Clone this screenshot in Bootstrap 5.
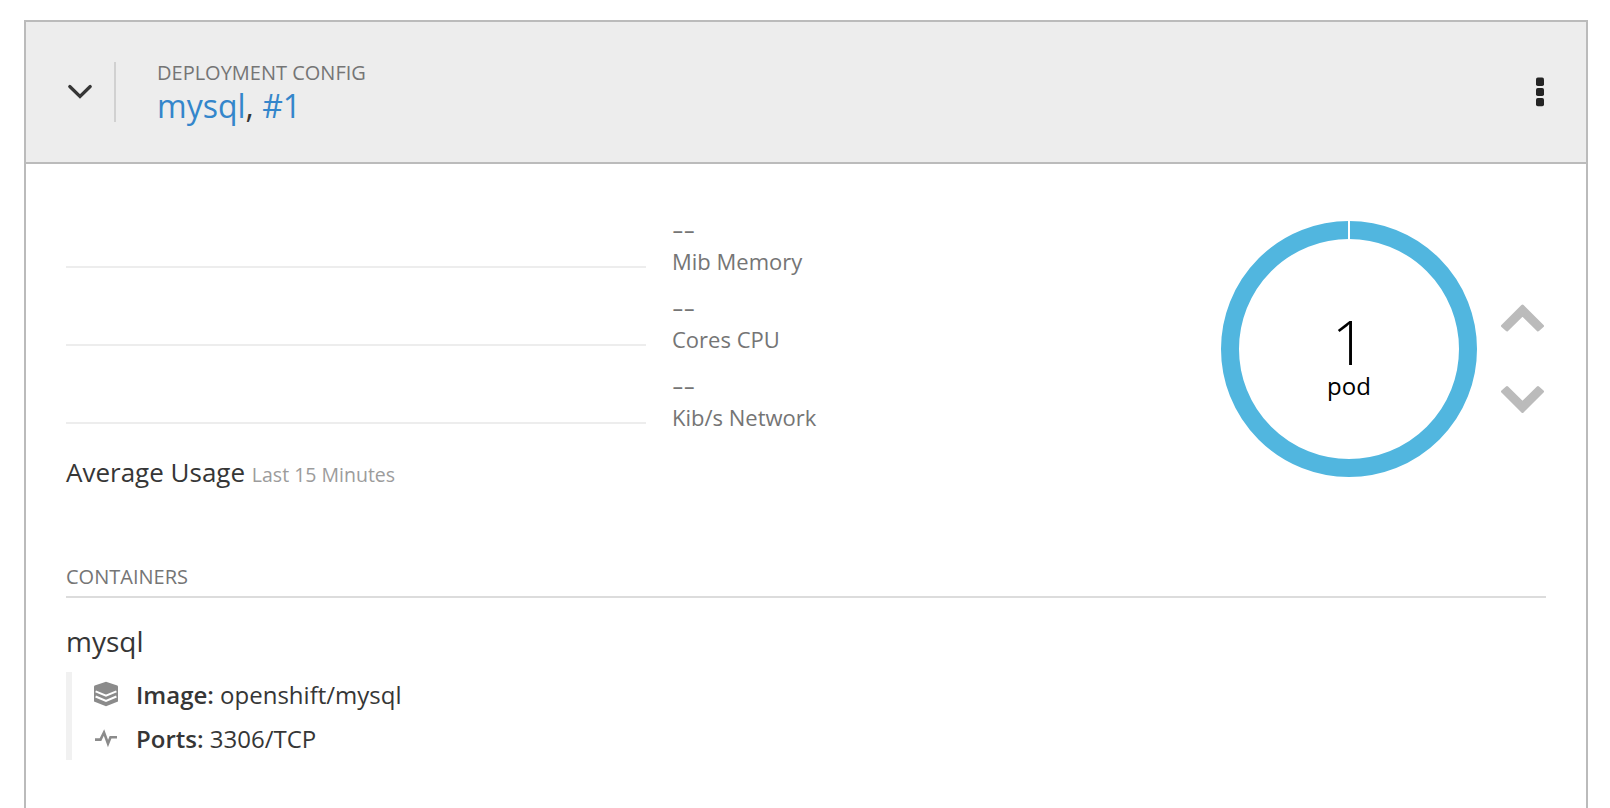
<!DOCTYPE html>
<html lang="en">
<head>
<meta charset="utf-8">
<title>mysql deployment</title>
<link href="https://cdn.jsdelivr.net/npm/bootstrap@5.3.0/dist/css/bootstrap.min.css" rel="stylesheet">
<style>
  body { font-family: "Open Sans", sans-serif; color: #363636; background: #fff; padding-top: 20px; }
  a { color: #3486cb; }
  .panel { margin: 0 22px 0 24px; height: 788px; border: 2px solid #bbb; border-bottom: 0; }
  .panel-top { height: 142px; background: #ededed; border-bottom: 2px solid #bbb; padding: 0 40px; }
  .toggle { width: 50px; height: 60px; border-right: 2px solid #d1d1d1; padding-left: 2px; }
  .heading { padding-left: 41px; }
  .eyebrow { font-size: 20px; line-height: 28px; color: #757575; }
  .title { font-size: 32px; line-height: 36px; margin: 1px 0; }
  .panel-main { padding: 26px 40px 0; }
  .overview { height: 256px; }
  .metric { height: 78px; }
  .spark { width: 580px; border-bottom: 2px solid #ededed; margin-right: 26px; height: 78px; }
  .metric-text { color: #757575; font-size: 22px; line-height: 30px; }
  .metric-value { font-size: 36px; font-weight: 300; line-height: 30px; height: 30px; margin-top: 24px; }
  .metric-label { margin-top: 2px; }
  .usage { font-size: 26px; line-height: 36px; margin-top: 30px; }
  .usage span { font-size: 19.5px; color: #9c9c9c; }
  .donut { margin-top: 30px; margin-right: 21.5px; }
  .scaler { margin-top: 112.5px; margin-right: 1.5px; }
  .section-label { font-size: 20px; line-height: 30px; color: #757575; border-bottom: 2px solid #dcdcdc; height: 36px; margin-top: 116px; }
  .cname { font-size: 28px; line-height: 40px; margin-top: 23px; }
  .details { border-left: 6px solid #f1f1f1; margin-top: 11px; padding-left: 22px; font-size: 24px; line-height: 46px; }
  .detail { height: 44px; }
  .details strong { font-weight: 600; }
  .details svg { margin-right: 18px; }
</style>
</head>
<body>
<main class="panel">
  <header class="panel-top d-flex align-items-center">
    <div class="toggle d-flex align-items-center">
      <svg width="24" height="16" viewBox="0 0 24 16" fill="none" stroke="#363636" stroke-width="3.2" stroke-linecap="round"><path d="M1.8 2.5 12 12.5 22.2 2.5"/></svg>
    </div>
    <div class="heading flex-grow-1">
      <div class="eyebrow">DEPLOYMENT CONFIG</div>
      <div class="title"><a class="text-decoration-none" href="#">mysql</a>, <a class="text-decoration-none" href="#">#1</a></div>
    </div>
    <svg width="12" height="30" viewBox="0 0 12 30" fill="#252525"><rect x="2" y=".6" width="8" height="8.4" rx="1.8"/><rect x="2" y="10.9" width="8" height="8.2" rx="1.8"/><rect x="2" y="21" width="8" height="8.2" rx="1.8"/></svg>
  </header>
  <div class="panel-main">
    <div class="overview d-flex">
      <div class="flex-grow-1">
        <div class="metrics">
          <div class="metric d-flex"><div class="spark"></div><div class="metric-text"><div class="metric-value">--</div><div class="metric-label">Mib Memory</div></div></div>
          <div class="metric d-flex"><div class="spark"></div><div class="metric-text"><div class="metric-value">--</div><div class="metric-label">Cores CPU</div></div></div>
          <div class="metric d-flex"><div class="spark"></div><div class="metric-text"><div class="metric-value">--</div><div class="metric-label">Kib/s Network</div></div></div>
        </div>
        <div class="usage">Average Usage <span>Last 15 Minutes</span></div>
      </div>
      <svg class="donut flex-shrink-0" width="258" height="258" viewBox="0 0 258 258" font-family="Open Sans" text-anchor="middle">
        <circle cx="129" cy="129" r="119" fill="none" stroke="#51b6df" stroke-width="18"/>
        <path d="M129 0V20" stroke="#fff" stroke-width="2"/>
        <text x="129" y="145" font-size="60" font-weight="300">1</text>
        <text x="129" y="175" font-size="24">pod</text>
      </svg>
      <svg class="scaler flex-shrink-0" width="45" height="112" viewBox="0 0 45 112" fill="#bbb" stroke="#bbb" stroke-width="3" stroke-linejoin="round"><path d="M22.5 3 42.5 23 38 27 22.5 11.8 7 27 2.5 23Z"/><path d="M22.5 108.5 42.5 88.5 38 84.5 22.5 99.7 7 84.5 2.5 88.5Z"/></svg>
    </div>
    <div class="section-label">CONTAINERS</div>
    <div class="cname">mysql</div>
    <div class="details">
      <div class="detail d-flex"><svg width="24" height="44" viewBox="0 0 24 44" fill="#8b8b8b"><path d="M12 9.7 23.3 13.4Q24 13.7 24 14.5V29.5L12 34.2 0 29.5V14.5Q0 13.7 .7 13.4Z"/><path d="M1.6 19.3 12 23.7 22.4 19.3M1.6 24.5 12 28.9 22.4 24.5" fill="none" stroke="#fff" stroke-width="2"/></svg><div><strong>Image:</strong> openshift/mysql</div></div>
      <div class="detail d-flex"><svg width="24" height="44" viewBox="0 0 24 44" fill="none" stroke="#8b8b8b" stroke-width="2.6"><path d="M1 23.6H6.5L10 16.5 14 27.5 16.5 21.3H23"/></svg><div><strong>Ports:</strong> 3306/TCP</div></div>
    </div>
  </div>
</main>
<script src="https://cdn.jsdelivr.net/npm/bootstrap@5.3.0/dist/js/bootstrap.bundle.min.js"></script>
</body>
</html>
